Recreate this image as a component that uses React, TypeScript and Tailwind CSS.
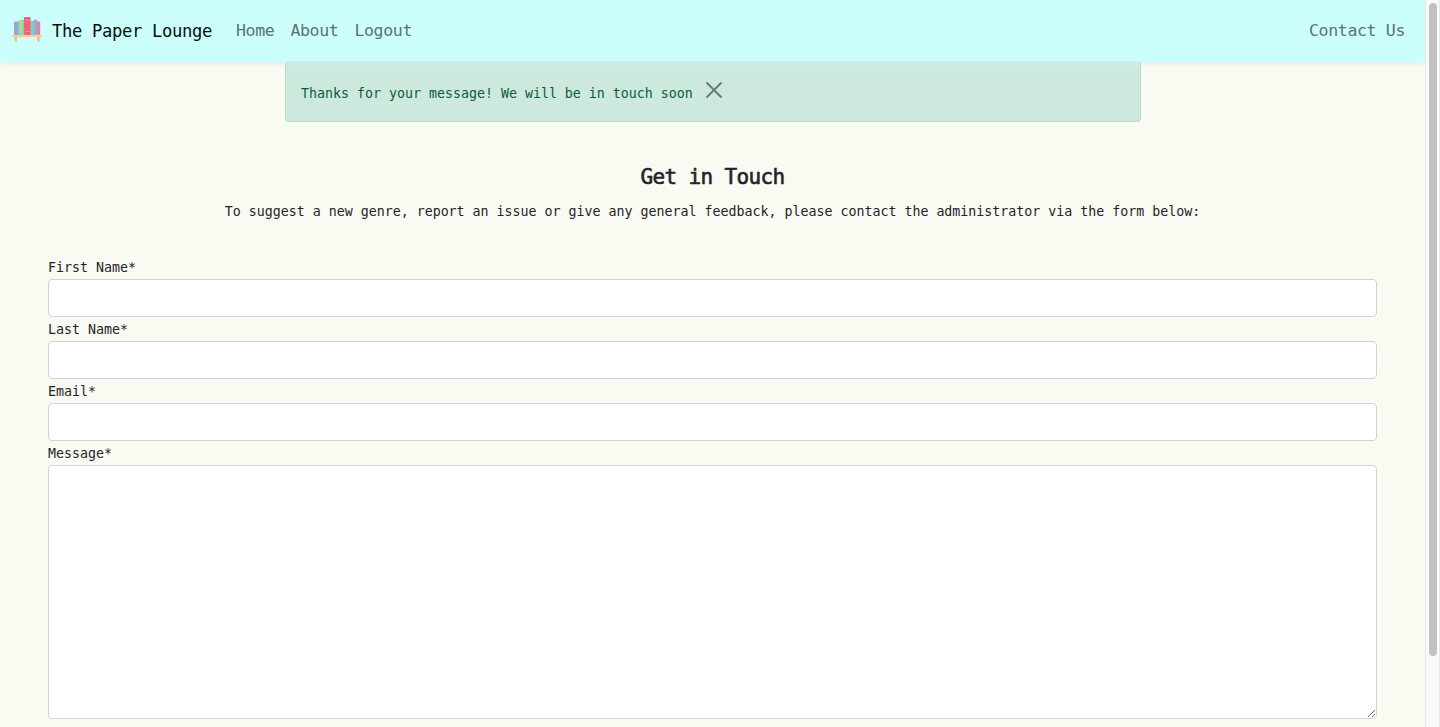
import React from "react";

const fields = ["First Name*", "Last Name*", "Email*"];

function BookshelfLogo() {
  return (
    <svg className="h-[30px] w-[30px] shrink-0" viewBox="0 0 30 30" aria-hidden="true">
      <rect x="2" y="6.5" width="4.8" height="13.5" rx="1" fill="#8eaae2" />
      <rect x="2" y="7.5" width="1.2" height="12.5" fill="#a9a0cf" />
      <rect x="6.5" y="5" width="5.8" height="15" rx="1" fill="#8fd49c" />
      <rect x="8" y="6" width="2" height="13" fill="#b9dc98" />
      <rect x="18.3" y="6" width="3.6" height="14" rx="1" fill="#83cfae" />
      <rect x="21.5" y="4.8" width="4" height="15.2" rx="1" fill="#85b3e8" />
      <rect x="25" y="6.5" width="3.2" height="13.5" rx="1" fill="#f27f93" />
      <rect x="12" y="2" width="6.6" height="18" rx="1" fill="#f2607c" />
      <path d="M13 5h4.6M13 16.5h4.6" stroke="#f88d9c" strokeWidth="1" />
      <rect x="0" y="20" width="30" height="2" rx=".5" fill="#fbd08f" />
      <path d="M2.2 22h3l-.7 5H3zM25 22h3l-.8 5h-1.5z" fill="#e8bf83" />
    </svg>
  );
}

export default function App() {
  return (
    <div className="flex h-[727px] overflow-hidden bg-[#f9faf1] font-['DejaVu_Sans_Mono',monospace] text-[13.29px] leading-6 text-[#212529]">
      <div className="flex min-w-0 flex-1 flex-col">
        <nav className="flex h-[62px] shrink-0 items-center rounded-b bg-[#ccfffc] pr-5 pb-0.5 pl-3 text-[16.6px] tracking-[-0.393px] text-[#5c7371] shadow-[0_2px_4px_rgba(0,100,130,0.09)]">
          <BookshelfLogo />
          <a href="#" className="mt-0.5 ml-2.5 w-40 text-[17.2px] tracking-[-0.354px] whitespace-nowrap text-[#071010]">The Paper Lounge</a>
          <div className="mt-0.5 ml-6 flex gap-4">
            <a href="#">Home</a>
            <a href="#">About</a>
            <a href="#">Logout</a>
          </div>
          <a href="#" className="mt-0.5 ml-auto">Contact Us</a>
        </nav>
        <div className="relative -mt-px ml-[285px] flex h-[61px] w-[856px] shrink-0 items-center rounded border border-[#b3dfca] border-t-[#c3ece3] bg-[#cde9dd] bg-linear-to-b from-[#caebe6] to-[#cde9dd] to-10% px-[15px] text-[#0a5b3b]">
          <span className="mt-1 whitespace-nowrap">Thanks for your message! We will be in touch soon</span>
          <button className="-mt-1 ml-[13px]" aria-label="Close">
            <svg className="h-4 w-4" viewBox="0 0 16 16" fill="none" stroke="#68766f" strokeWidth="1.8" strokeLinecap="round">
              <path d="M1 1l14 14M15 1L1 15" />
            </svg>
          </button>
        </div>
        <header className="pt-[41px] text-center">
          <h1 className="text-[21px] leading-[29px] font-normal tracking-[-0.643px] [-webkit-text-stroke:0.6px_#212529]">Get in Touch</h1>
          <p className="mt-2">To suggest a new genre, report an issue or give any general feedback, please contact the administrator via the form below:</p>
        </header>
        <form className="mt-8 px-12">
          {fields.map((label) => (
            <label key={label} className="block">
              <span className="block">{label}</span>
              <input className="-mt-px mb-px block h-[38px] w-full rounded border border-[#ced4da] bg-white px-3 outline-none" />
            </label>
          ))}
          <label className="block">
            <span className="block">Message*</span>
            <textarea className="-mt-px block h-[254px] w-full resize rounded border border-[#ced4da] bg-white px-3 py-1.5 outline-none" />
          </label>
        </form>
      </div>
      <div className="flex w-[15px] shrink-0 justify-center border-x border-[#e8e8e8] bg-[#fafafa] pt-[3px]">
        <div className="h-[653px] w-2 rounded-full bg-[#c1c1c1]" />
      </div>
    </div>
  );
}
